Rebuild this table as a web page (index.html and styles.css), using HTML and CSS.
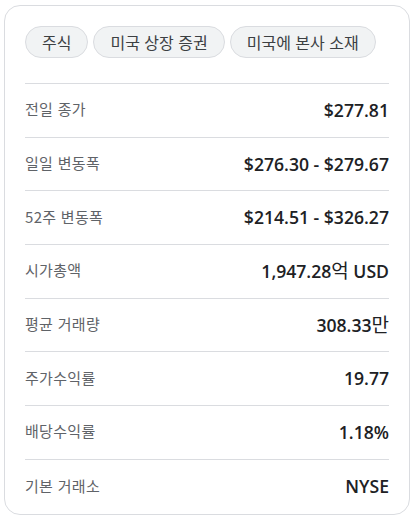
FILE: index.html
```html
<!DOCTYPE html>
<html lang="ko">
<head>
<meta charset="utf-8">
<link rel="stylesheet" href="styles.css">
</head>
<body>
<div class="card">
  <div class="chips">
    <span class="chip">주식</span>
    <span class="chip">미국 상장 증권</span>
    <span class="chip">미국에 본사 소재</span>
  </div>
  <div class="rows">
    <div class="row"><span class="label">전일 종가</span><span class="value">$277.81</span></div>
    <div class="row"><span class="label">일일 변동폭</span><span class="value">$276.30 - $279.67</span></div>
    <div class="row"><span class="label">52주 변동폭</span><span class="value">$214.51 - $326.27</span></div>
    <div class="row"><span class="label">시가총액</span><span class="value">1,947.28<span class="unit">억</span> USD</span></div>
    <div class="row"><span class="label">평균 거래량</span><span class="value">308.33<span class="unit">만</span></span></div>
    <div class="row"><span class="label">주가수익률</span><span class="value">19.77</span></div>
    <div class="row"><span class="label">배당수익률</span><span class="value">1.18%</span></div>
    <div class="row"><span class="label">기본 거래소</span><span class="value">NYSE</span></div>
  </div>
</div>
</body>
</html>
```
FILE: styles.css
```css
* { box-sizing: border-box; }
body {
  margin: 0;
  padding: 5px 5px 0 4px;
  background: #fff;
  font-family: Roboto, "Noto Sans CJK KR", sans-serif;
}
.card {
  width: 406px;
  border: 1px solid #dadce0;
  border-radius: 16px;
  padding: 20px 20px 0 20px;
}
.chips {
  display: flex;
  gap: 5px;
  padding-bottom: 25px;
  border-bottom: 1px solid #dadce0;
}
.chip {
  height: 32px;
  display: flex;
  align-items: center;
  padding: 0 16px;
  border: 1px solid #dadce0;
  border-radius: 16px;
  background: #f1f3f4;
  color: #3c4043;
  font-size: 16px;
  font-family: "Noto Sans CJK KR", sans-serif;
}
.row {
  display: flex;
  justify-content: space-between;
  align-items: center;
  height: 53.7px;
  border-bottom: 1px solid #dadce0;
}
.row:last-child { border-bottom: none; }
.label {
  font-family: "Noto Sans CJK KR", sans-serif;
  font-size: 15px;
  line-height: 20px;
  color: #5f6368;
  letter-spacing: 0.3px;
  margin-top: -2px;
}
.value {
  font-family: "Open Sans", "Noto Sans CJK KR", sans-serif;
  font-size: 17.6px;
  line-height: 24px;
  font-weight: 600;
  color: #202124;
  margin-top: -1px;
}
.unit {
  font-family: "Noto Sans CJK KR", sans-serif;
  font-weight: 400;
  font-size: 19px;
}
```
